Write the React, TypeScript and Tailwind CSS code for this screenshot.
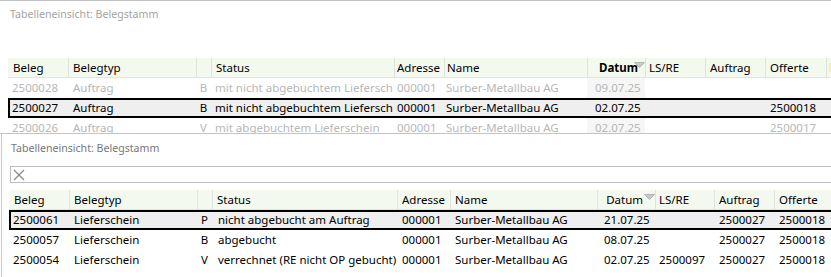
import React from "react";

type Cell = { t?: string; c: string };

const topGrid = "grid grid-cols-[60px_128px_15px_183px_50px_143px_58px_60px_60px_61px_1fr]";
const botGrid = "grid grid-cols-[60px_128px_15px_185px_53px_147px_58px_59px_60px_60px_1fr]";

const cellBase = "whitespace-nowrap overflow-hidden leading-[20px] h-[20px]";
const hdrBase = "whitespace-nowrap overflow-hidden leading-[19px] h-[19px] border-l border-[#dfe3dc]";

const selShadow =
  "bg-[#efefef] shadow-[inset_2px_0_0_#000,inset_0_2px_0_#000,inset_0_-2px_0_#000]";

function SortArrow() {
  return (
    <svg
      className="absolute right-[0px] top-[4px]"
      width="11"
      height="6"
      viewBox="0 0 11 6"
    >
      <polygon points="0.5,0.5 10.5,0.5 5.5,5.5" fill="#c8c8c8" stroke="#a9a9a9" strokeWidth="0.8" />
    </svg>
  );
}

function DataRow({ grid, cells, cls }: { grid: string; cells: Cell[]; cls: string }) {
  return (
    <div className={`${grid} ${cls}`}>
      {cells.map((cell, i) => (
        <div key={i} className={`${cellBase} ${cell.c}`}>
          {cell.t ?? ""}
        </div>
      ))}
    </div>
  );
}

function XIcon() {
  return (
    <svg width="12" height="12" viewBox="0 0 12 12" className="ml-[2px]">
      <line x1="1" y1="1" x2="11" y2="11" stroke="#8c8c8c" strokeWidth="1.3" />
      <line x1="11" y1="1" x2="1" y2="11" stroke="#8c8c8c" strokeWidth="1.3" />
    </svg>
  );
}

export default function App() {
  const topPad = [
    "pl-[4px]",
    "pl-[5px]",
    "text-center",
    "pl-[4px]",
    "pl-[3px]",
    "pl-[2px]",
    "pl-[8px]",
    "pl-[4px]",
    "pl-[4px]",
    "pl-[5px]",
    "",
  ];
  const botPad = [
    "pl-[4px]",
    "pl-[5px]",
    "text-center",
    "pl-[6px]",
    "pl-[5px]",
    "pl-[5px]",
    "pl-[7px]",
    "pl-[4px]",
    "pl-[5px]",
    "pl-[5px]",
    "",
  ];

  const mk = (vals: string[], pads: string[], extra?: (i: number) => string): Cell[] =>
    pads.map((p, i) => ({ t: vals[i] ?? "", c: `${p} ${extra ? extra(i) : ""}` }));

  const datumShade = (i: number) => (i === 6 ? "bg-[#f6f6f6]" : "");

  return (
    <div className="w-[831px] h-[277px] bg-white overflow-hidden font-['Noto_Sans',sans-serif] text-[11.5px] text-black">
      {/* Top panel */}
      <div className="h-[134px] border-t border-b border-[#c3c3c3] overflow-hidden">
        <div className="pl-[10px] pt-[5px] text-[10.6px] leading-[16px] text-[#a3a3a3]">
          Tabelleneinsicht: Belegstamm
        </div>
        <div className="ml-[8px] mt-[36px] w-[823px]">
          <div className={`${topGrid} bg-[#f3f9ef] border-b border-[#e3e3e3]`}>
            <div className="whitespace-nowrap overflow-hidden leading-[19px] h-[19px] pl-[5px]">Beleg</div>
            <div className={`${hdrBase} pl-[4px]`}>Belegtyp</div>
            <div className={`${hdrBase}`}></div>
            <div className={`${hdrBase} pl-[4px]`}>Status</div>
            <div className={`${hdrBase} pl-[2px]`}>Adresse</div>
            <div className={`${hdrBase} pl-[2px]`}>Name</div>
            <div className={`${hdrBase} relative text-right pr-[7px] font-bold`}>
              Datum
              <SortArrow />
            </div>
            <div className={`${hdrBase} pl-[3px]`}>LS/RE</div>
            <div className={`${hdrBase} pl-[4px]`}>Auftrag</div>
            <div className={`${hdrBase} pl-[4px]`}>Offerte</div>
            <div className={`${hdrBase} pl-[2px] pt-[5px]`}>
              <div className="w-[4px] h-[9px] bg-[#f6efa6]"></div>
            </div>
          </div>
          <DataRow
            grid={topGrid}
            cls="text-[#b7b7b7]"
            cells={mk(
              ["2500028", "Auftrag", "B", "mit nicht abgebuchtem Liefersch", "000001", "Surber-Metallbau AG", "09.07.25", "", "", "", ""],
              topPad,
              datumShade
            )}
          />
          <DataRow
            grid={topGrid}
            cls={selShadow}
            cells={mk(
              ["2500027", "Auftrag", "B", "mit nicht abgebuchtem Liefersch", "000001", "Surber-Metallbau AG", "02.07.25", "", "", "2500018", ""],
              topPad
            )}
          />
          <DataRow
            grid={topGrid}
            cls="text-[#b7b7b7]"
            cells={mk(
              ["2500026", "Auftrag", "V", "mit abgebuchtem Lieferschein", "000001", "Surber-Metallbau AG", "02.07.25", "", "", "2500017", ""],
              topPad,
              datumShade
            )}
          />
        </div>
      </div>

      {/* Bottom panel */}
      <div className="h-[143px] ml-[1px] border-l border-[#c9c9c9] overflow-hidden">
        <div className="pl-[9px] pt-[6px] text-[10.6px] leading-[16px] text-[#777777]">
          Tabelleneinsicht: Belegstamm
        </div>
        <div className="ml-[8px] mt-[10px] h-[17px] border-t border-b border-l border-[#bdbdbd] flex items-center">
          <XIcon />
        </div>
        <div className="ml-[7px] mt-[7px] w-[830px]">
          <div className={`${botGrid} bg-[#f3f9ef] border-b border-[#e3e3e3]`}>
            <div className="whitespace-nowrap overflow-hidden leading-[19px] h-[19px] pl-[5px]">Beleg</div>
            <div className={`${hdrBase} pl-[4px]`}>Belegtyp</div>
            <div className={`${hdrBase}`}></div>
            <div className={`${hdrBase} pl-[4px]`}>Status</div>
            <div className={`${hdrBase} pl-[4px]`}>Adresse</div>
            <div className={`${hdrBase} pl-[4px]`}>Name</div>
            <div className={`${hdrBase} relative text-right pr-[12px]`}>
              Datum
              <SortArrow />
            </div>
            <div className={`${hdrBase} pl-[3px]`}>LS/RE</div>
            <div className={`${hdrBase} pl-[4px]`}>Auftrag</div>
            <div className={`${hdrBase} pl-[4px]`}>Offerte</div>
            <div></div>
          </div>
          <DataRow
            grid={botGrid}
            cls={selShadow}
            cells={mk(
              ["2500061", "Lieferschein", "P", "nicht abgebucht am Auftrag", "000001", "Surber-Metallbau AG", "21.07.25", "", "2500027", "2500018", ""],
              botPad
            )}
          />
          <DataRow
            grid={botGrid}
            cls=""
            cells={mk(
              ["2500057", "Lieferschein", "B", "abgebucht", "000001", "Surber-Metallbau AG", "08.07.25", "", "2500027", "2500018", ""],
              botPad
            )}
          />
          <DataRow
            grid={botGrid}
            cls=""
            cells={mk(
              ["2500054", "Lieferschein", "V", "verrechnet (RE nicht OP gebucht)", "000001", "Surber-Metallbau AG", "02.07.25", "2500097", "2500027", "2500018", ""],
              botPad
            )}
          />
        </div>
      </div>
    </div>
  );
}
